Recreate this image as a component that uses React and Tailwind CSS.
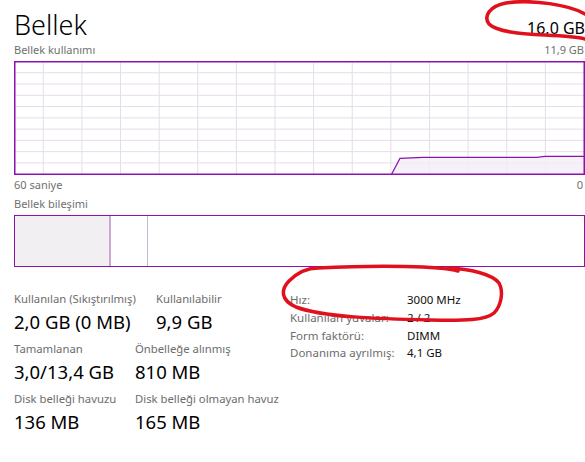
import React from "react";

const purple = "#8b12ae";

function UsageChart() {
  const vlines = [];
  for (let k = 0; k < 14; k++) vlines.push(29.3 + 38.62 * k);
  const hlines = [];
  for (let k = 1; k < 10; k++) hlines.push(0.5 + 11.27 * k);
  const line = "M377.7 113 L386 97.3 L409 96.3 L522.7 96.3 L531 95.3 L571 95.3";
  return (
    <svg width="571" height="114" viewBox="0 0 571 114" className="block">
      {vlines.map((x) => (
        <line key={"v" + x} x1={x} y1="0" x2={x} y2="114" stroke="#e6dcea" strokeWidth="1" />
      ))}
      {hlines.map((y) => (
        <line key={"h" + y} x1="0" y1={y} x2="571" y2={y} stroke="#e6dcea" strokeWidth="1" />
      ))}
      <path d={line + " L571 113 Z"} fill="#f4edf6" fillOpacity="0.8" />
      <path d={line} fill="none" stroke={purple} strokeWidth="1.3" />
      <rect x="0.75" y="0.75" width="569.5" height="112.5" fill="none" stroke={purple} strokeWidth="1.5" />
    </svg>
  );
}

function Stat({ label, value, className }) {
  return (
    <div className={"whitespace-nowrap " + (className || "")}>
      <div className="text-[11.3px] leading-[16px] text-[#6d6d6d]">{label}</div>
      <div className="text-[18.5px] leading-[24px] text-black mt-[3px]">{value}</div>
    </div>
  );
}

function Detail({ label, value }) {
  return (
    <div className="flex h-[17.7px] items-center text-[11.5px] whitespace-nowrap">
      <div className="w-[117px] text-[#6d6d6d]">{label}</div>
      <div className="text-[#111]">{value}</div>
    </div>
  );
}

export default function App() {
  return (
    <div
      className="relative w-[585px] h-[462px] bg-white overflow-hidden pl-[14px]"
      style={{ fontFamily: "'Noto Sans', 'Open Sans', sans-serif" }}
    >
      <div className="flex justify-between items-end pt-[4px] h-[42px]">
        <div className="text-[27px] leading-[34px] text-black font-light">Bellek</div>
        <div className="text-[16px] leading-[20px] text-black mb-[4px]">16,0 GB</div>
      </div>

      <div className="flex justify-between text-[11px] leading-[14px] text-[#707070] mt-[1px] pr-[1px]">
        <span>Bellek kullanımı</span>
        <span>11,9 GB</span>
      </div>
      <div className="mt-[4px]">
        <UsageChart />
      </div>
      <div className="flex justify-between text-[11px] leading-[14px] text-[#707070] mt-[3px] pr-[2px]">
        <span>60 saniye</span>
        <span>0</span>
      </div>
      <div className="text-[11px] leading-[14px] text-[#707070] mt-[5px]">Bellek bileşimi</div>

      <div className="mt-[4px] flex h-[52px] w-[571px] border-[1.5px] border-[#8b12ae]">
        <div className="w-[96px] bg-[#f2eff3] border-r-2 border-[#c9a9d3]" />
        <div className="w-[37px] border-r border-[#c6b6ca]" />
        <div className="flex-1" />
      </div>

      <div className="flex mt-[24px]">
        <div className="w-[276px]">
          <div className="flex">
            <Stat className="w-[142px]" label="Kullanılan (Sıkıştırılmış)" value="2,0 GB (0 MB)" />
            <Stat label="Kullanılabilir" value="9,9 GB" />
          </div>
          <div className="flex mt-[7px]">
            <Stat className="w-[121px]" label="Tamamlanan" value="3,0/13,4 GB" />
            <Stat label="Önbelleğe alınmış" value="810 MB" />
          </div>
          <div className="flex mt-[7px]">
            <Stat className="w-[121px]" label="Disk belleği havuzu" value="136 MB" />
            <Stat label="Disk belleği olmayan havuz" value="165 MB" />
          </div>
        </div>
        <div>
          <Detail label="Hız:" value="3000 MHz" />
          <Detail label="Kullanılan yuvalar:" value="2 / 2" />
          <Detail label="Form faktörü:" value="DIMM" />
          <Detail label="Donanıma ayrılmış:" value="4,1 GB" />
        </div>
      </div>

      <svg
        className="absolute left-0 top-0 pointer-events-none"
        width="585"
        height="462"
        viewBox="0 0 585 462"
      >
        <path
          d="M585 14 C570 5 532 -1 506 3 C490 6 483 16 489 24 C497 32 520 34 545 35 C565 36 578 37 585 39"
          fill="none"
          stroke="#e0101c"
          strokeWidth="3.5"
          strokeLinecap="round"
        />
        <path
          d="M318 268 C380 265 440 266 458 271 M448 268 C470 269 492 274 499 283 C504 292 501 306 494 313 C486 320 465 321 430 320 C380 319 322 317 296 307 C280 300 281 289 289 281 C297 273 308 268 318 268"
          fill="none"
          stroke="#e0101c"
          strokeWidth="3.5"
          strokeLinecap="round"
        />
      </svg>
    </div>
  );
}
